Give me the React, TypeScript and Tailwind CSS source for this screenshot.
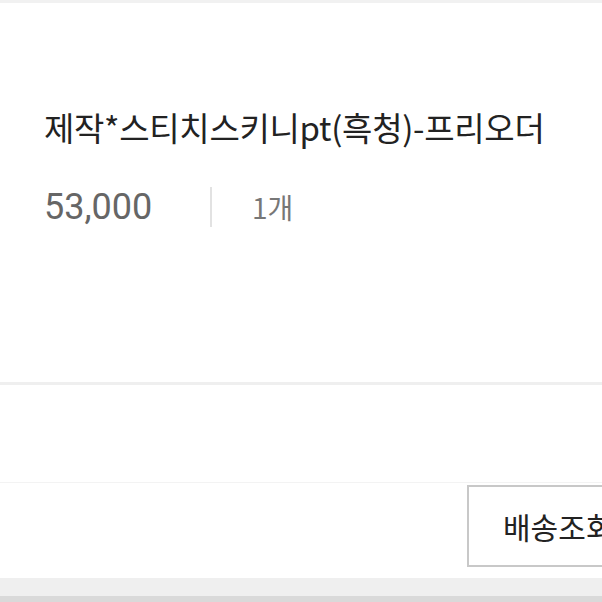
export default function App() {
  return (
    <div
      className="w-[602px] h-[602px] overflow-hidden bg-white flex flex-col"
      style={{ fontFamily: '"Noto Sans CJK KR", "Noto Sans", sans-serif' }}
    >
      <div className="h-[3px] bg-[#f1f1f1] shrink-0" />
      <div className="h-[379px] shrink-0 px-[44px] pt-[100px]">
        <div className="text-[33px] leading-[48px] text-[#222] tracking-[-0.3px] whitespace-nowrap">
          제작*스티치스키니pt(흑청)-프리오더
        </div>
        <div className="flex items-center mt-[34px] h-[44px]">
          <span className="text-[36px] text-[#666] w-[166px]" style={{ fontFamily: 'Roboto, sans-serif' }}>
            53,000
          </span>
          <span className="w-[2px] h-[40px] bg-[#e2e2e2]" />
          <span className="text-[28px] text-[#777] ml-[40px]">1개</span>
        </div>
      </div>
      <div className="h-[3px] bg-[#efefef] shrink-0" />
      <div className="h-[98px] shrink-0 border-b border-[#f3f3f3]" />
      <div className="h-[95px] shrink-0 flex items-start pl-[467px] pt-[2px]">
        <div className="w-[170px] h-[82px] shrink-0 border-2 border-[#c8c8c8] flex items-center pl-[34px] text-[30px] text-[#222] whitespace-nowrap">
          배송조회
        </div>
      </div>
      <div className="h-[18px] bg-[#efefef] shrink-0" />
      <div className="flex-1 bg-[#d9d9d9]" />
    </div>
  );
}
